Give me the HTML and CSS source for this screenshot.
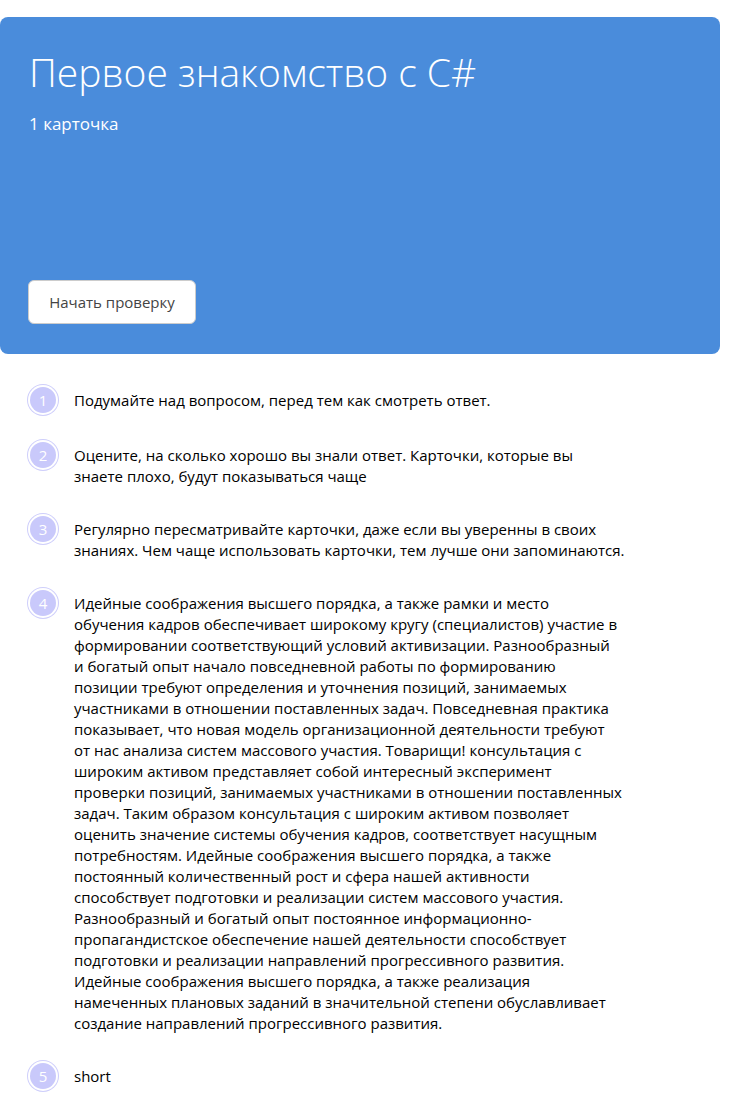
FILE: index.html
```html
<!DOCTYPE html>
<html lang="ru">
<head>
<meta charset="utf-8">
<link rel="stylesheet" href="styles.css">
</head>
<body>
<div class="page">
  <section class="deck">
    <h1 class="deck-title">Первое знакомство с C#</h1>
    <div class="deck-count">1 карточка</div>
    <button class="deck-btn">Начать проверку</button>
  </section>
  <ol class="tips">
    <li class="tip"><span class="num">1</span><p class="tip-text">Подумайте над вопросом, перед тем как смотреть ответ.</p></li>
    <li class="tip"><span class="num">2</span><p class="tip-text">Оцените, на сколько хорошо вы знали ответ. Карточки, которые вы<br>знаете плохо, будут показываться чаще</p></li>
    <li class="tip"><span class="num">3</span><p class="tip-text">Регулярно пересматривайте карточки, даже если вы уверенны в своих<br>знаниях. Чем чаще использовать карточки, тем лучше они запоминаются.</p></li>
    <li class="tip"><span class="num">4</span><p class="tip-text">Идейные соображения высшего порядка, а также рамки и место<br>обучения кадров обеспечивает широкому кругу (специалистов) участие в<br>формировании соответствующий условий активизации. Разнообразный<br>и богатый опыт начало повседневной работы по формированию<br>позиции требуют определения и уточнения позиций, занимаемых<br>участниками в отношении поставленных задач. Повседневная практика<br>показывает, что новая модель организационной деятельности требуют<br>от нас анализа систем массового участия. Товарищи! консультация с<br>широким активом представляет собой интересный эксперимент<br>проверки позиций, занимаемых участниками в отношении поставленных<br>задач. Таким образом консультация с широким активом позволяет<br>оценить значение системы обучения кадров, соответствует насущным<br>потребностям. Идейные соображения высшего порядка, а также<br>постоянный количественный рост и сфера нашей активности<br>способствует подготовки и реализации систем массового участия.<br>Разнообразный и богатый опыт постоянное информационно-<br>пропагандистское обеспечение нашей деятельности способствует<br>подготовки и реализации направлений прогрессивного развития.<br>Идейные соображения высшего порядка, а также реализация<br>намеченных плановых заданий в значительной степени обуславливает<br>создание направлений прогрессивного развития.</p></li>
    <li class="tip"><span class="num">5</span><p class="tip-text">short</p></li>
  </ol>
</div>
</body>
</html>
```
FILE: styles.css
```css
html, body {
  margin: 0;
  padding: 0;
  background: #fff;
}
body {
  font-family: "Segoe UI", "Open Sans", "Noto Sans", sans-serif;
  color: #000;
}
.page {
  width: 720px;
  padding-top: 17px;
}
.deck {
  background: #4a8cdb;
  border-radius: 8px;
  height: 337px;
  box-sizing: border-box;
  padding: 31px 29px 0;
  display: flex;
  flex-direction: column;
  align-items: flex-start;
  color: #fff;
}
.deck-title {
  margin: 0;
  font-size: 39px;
  font-weight: 300;
  line-height: 48px;
}
.deck-count {
  margin-top: 17px;
  font-size: 17px;
  line-height: 22px;
}
.deck-btn {
  margin-top: auto;
  margin-bottom: 30px;
  width: 168px;
  height: 44px;
  margin-left: -1px;
  background: #fff;
  border: 1px solid #ccc;
  border-radius: 6px;
  font-family: inherit;
  font-size: 15px;
  color: #444;
}
.tips {
  list-style: none;
  margin: 0;
  padding: 36px 0 0 0;
}
.tip {
  display: flex;
  align-items: flex-start;
  margin-bottom: 32px;
}
.num {
  flex: none;
  width: 26px;
  height: 26px;
  margin: -3px 18px 0 30px;
  border-radius: 50%;
  background: #c9c9fb;
  box-shadow: 0 0 0 2px #fff, 0 0 0 3px #cfcffb;
  color: #fff;
  font-size: 15px;
  line-height: 26px;
  text-align: center;
}
.tip-text {
  margin: 0;
  width: 610px;
  font-size: 15px;
  line-height: 21px;
}
```
